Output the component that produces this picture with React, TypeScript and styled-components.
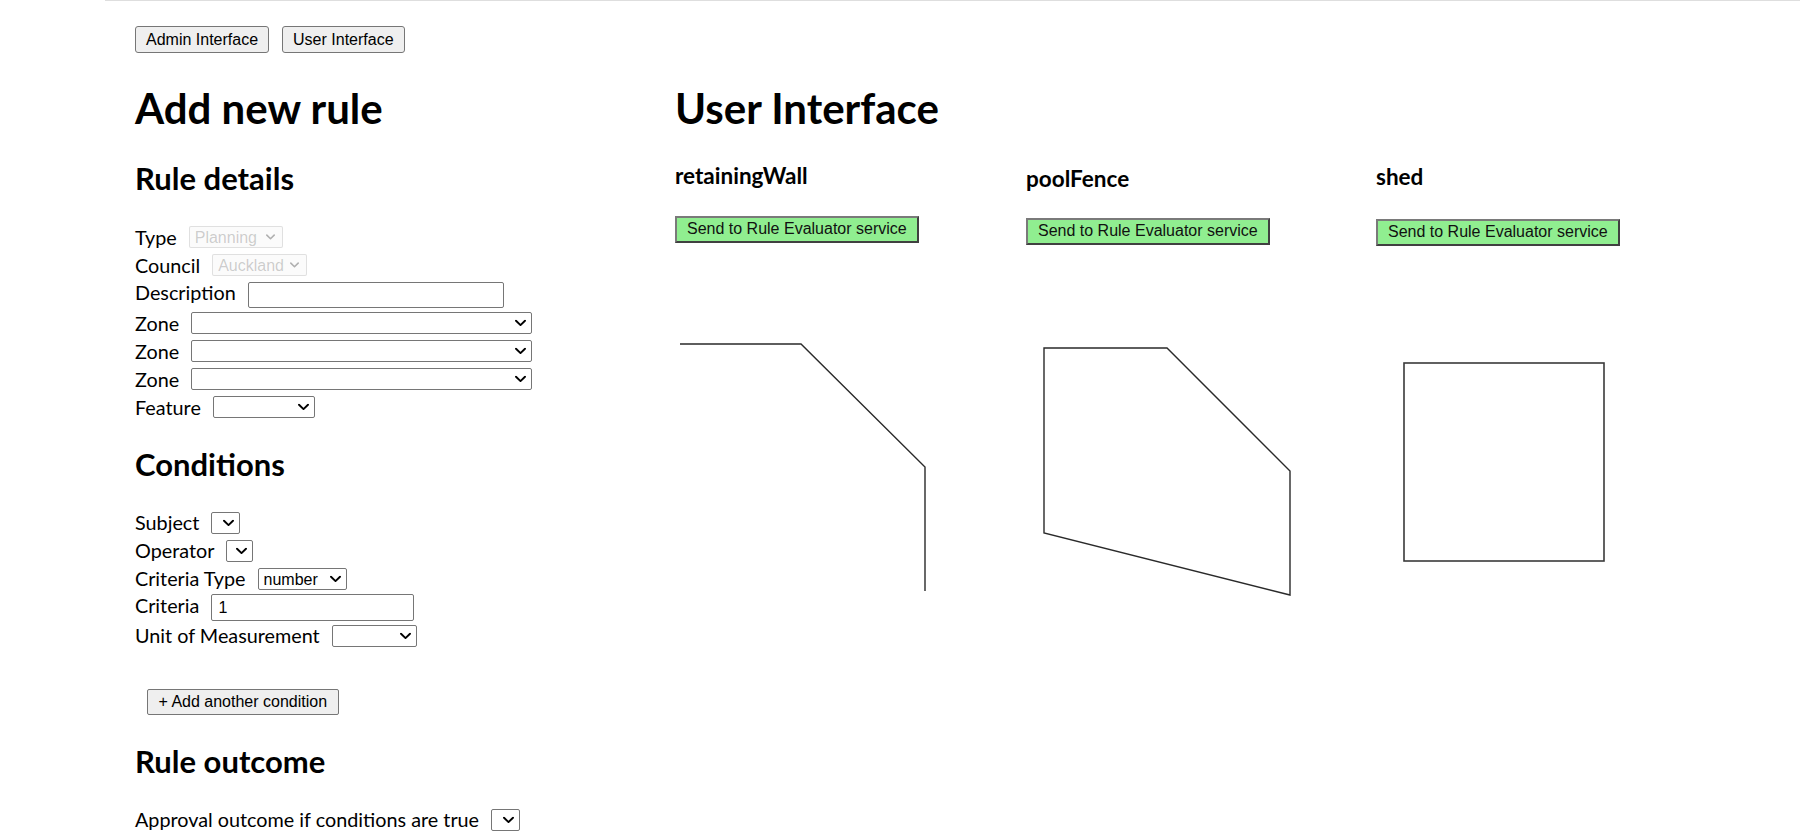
import React from "react";
import styled, { createGlobalStyle } from "styled-components";

const Global = createGlobalStyle`
  html, body { margin: 0; padding: 0; background: #fff; }
  body {
    font-family: Lato, "Segoe UI", "Noto Sans", sans-serif;
    font-size: 19.8px;
    line-height: 1.2;
    color: #000;
  }
`;

const Shell = styled.div`
  margin-left: 105px;
  border-top: 1px solid #dedede;
  padding: 25px 0 0 30px;
  height: 832px;
  box-sizing: border-box;
  overflow: hidden;
`;

const Nav = styled.div`
  display: flex;
  gap: 13px;
`;

const ctrlFont = `font-family: "Liberation Sans", Arial, sans-serif; font-size: 16px;`;

const NavButton = styled.button`
  ${ctrlFont}
  height: 27px;
  padding: 0 10px;
  border: 1px solid #767676;
  border-radius: 3px;
  background: #efefef;
  color: #000;
`;

const Columns = styled.div`
  display: grid;
  grid-template-columns: 540px 1fr;
`;

const Column = styled.div`
  display: flex;
  flex-direction: column;
  align-items: flex-start;
`;

const Title = styled.h1`
  margin: 29.5px 0 0;
  font-size: 42px;
  line-height: 1.2;
  font-weight: 700;
`;

const Section = styled.h2<{ $mt: number }>`
  margin: ${(p) => p.$mt}px 0 0;
  font-size: 31px;
  line-height: 1.2;
  font-weight: 700;
`;

const Rows = styled.div<{ $mt: number }>`
  margin-top: ${(p) => p.$mt}px;
  display: flex;
  flex-direction: column;
`;

const Row = styled.div<{ $h?: number; $field?: number }>`
  display: flex;
  align-items: ${(p) => (p.$field !== undefined ? "baseline" : "center")};
  gap: 12px;
  height: ${(p) => p.$h ?? 28}px;
  padding-top: ${(p) => p.$field ?? 0}px;
  box-sizing: border-box;
  white-space: nowrap;
`;

const Label = styled.span`
  font-size: 19.8px;
`;

const SelectBox = styled.span<{ $w: number }>`
  position: relative;
  display: inline-block;
  width: ${(p) => p.$w}px;
  height: 22px;
`;

const NativeSelect = styled.select`
  ${ctrlFont}
  appearance: none;
  -webkit-appearance: none;
  display: block;
  width: 100%;
  height: 100%;
  box-sizing: border-box;
  padding: 0 18px 0 5px;
  border: 1px solid #767676;
  border-radius: 2px;
  background: #fff;
  color: #000;
  &:disabled {
    color: rgba(16, 16, 16, 0.3);
    border-color: rgba(118, 118, 118, 0.3);
    background: rgba(239, 239, 239, 0.3);
  }
`;

const Chevron = styled.svg<{ $dim?: boolean }>`
  position: absolute;
  right: ${(p) => (p.$dim ? 8 : 6)}px;
  top: 50%;
  width: ${(p) => (p.$dim ? 9 : 11)}px;
  height: 7px;
  transform: translateY(-50%);
  pointer-events: none;
  stroke: ${(p) => (p.$dim ? "#b0b0b0" : "#000")};
`;

function Select({ w, disabled, value }: { w: number; disabled?: boolean; value?: string }) {
  return (
    <SelectBox $w={w}>
      <NativeSelect disabled={disabled} defaultValue={value ?? ""}>
        <option value={value ?? ""}>{value ?? ""}</option>
      </NativeSelect>
      <Chevron $dim={disabled} viewBox="0 0 11 7" fill="none">
        <path d="M1 1.2 L5.5 5.6 L10 1.2" strokeWidth="1.9" strokeLinecap="round" strokeLinejoin="round" />
      </Chevron>
    </SelectBox>
  );
}

const TextInput = styled.input<{ $w: number; $h: number }>`
  ${ctrlFont}
  width: ${(p) => p.$w}px;
  height: ${(p) => p.$h}px;
  box-sizing: border-box;
  padding: 1px 6px;
  border: 1px solid #767676;
  border-radius: 2px;
  color: #000;
`;

const AddButton = styled.button`
  ${ctrlFont}
  margin: 38.5px 0 0 12px;
  height: 26px;
  padding: 0 10.5px;
  border: 1px solid #767676;
  border-radius: 2px;
  background: #efefef;
  color: #000;
`;

const Cards = styled.div`
  display: grid;
  grid-template-columns: 351px 350px 1fr;
`;

const Card = styled.div<{ $pad: number }>`
  display: flex;
  flex-direction: column;
  align-items: flex-start;
  padding-top: ${(p) => p.$pad}px;
`;

const CardTitle = styled.h3`
  margin: 0;
  font-size: 22.5px;
  line-height: 1.2;
  font-weight: 700;
`;

const SendButton = styled.button<{ $mt: number }>`
  ${ctrlFont}
  margin-top: ${(p) => p.$mt}px;
  height: 27px;
  padding: 0 10px;
  border: 2px solid;
  border-color: #7a7a7a #404040 #404040 #7a7a7a;
  border-radius: 0;
  background: #90ee90;
  color: #111;
`;

const Drawing = styled.svg<{ $mt: number }>`
  display: block;
  margin-top: ${(p) => p.$mt}px;
  overflow: visible;
`;

type Shape = {
  name: string;
  pad: number;
  btn: number;
  svgTop: number;
  kind: "polyline" | "polygon" | "rect";
  points: string;
};

const shapes: Shape[] = [
  { name: "retainingWall", pad: 28.9, btn: 27.2, svgTop: 100, kind: "polyline", points: "5,1 126,1 250,124 250,248" },
  { name: "poolFence", pad: 31.9, btn: 26.2, svgTop: 102, kind: "polygon", points: "18,1 141,1 264,124 264,248 18,186" },
  { name: "shed", pad: 29.9, btn: 29.2, svgTop: 116, kind: "rect", points: "" },
];

function ShapeDrawing({ s }: { s: Shape }) {
  return (
    <Drawing $mt={s.svgTop} width="300" height="250" viewBox="0 0 300 250">
      {s.kind === "polyline" && <polyline points={s.points} fill="none" stroke="#2a2a2a" strokeWidth="1.4" />}
      {s.kind === "polygon" && <polygon points={s.points} fill="none" stroke="#2a2a2a" strokeWidth="1.4" />}
      {s.kind === "rect" && <rect x="28" y="1" width="200" height="198" fill="none" stroke="#3a3a3a" strokeWidth="1.6" />}
    </Drawing>
  );
}

export default function App() {
  return (
    <>
      <Global />
      <Shell>
        <Nav>
          <NavButton>Admin Interface</NavButton>
          <NavButton>User Interface</NavButton>
        </Nav>
        <Columns>
          <Column>
            <Title>Add new rule</Title>
            <Section $mt={27.5}>Rule details</Section>
            <Rows $mt={25.9}>
              <Row>
                <Label>Type</Label>
                <Select w={94} disabled value="Planning" />
              </Row>
              <Row>
                <Label>Council</Label>
                <Select w={95} disabled value="Auckland" />
              </Row>
              <Row $h={30} $field={1.5}>
                <Label>Description</Label>
                <TextInput $w={256} $h={26} type="text" defaultValue="" />
              </Row>
              <Row>
                <Label>Zone</Label>
                <Select w={341} />
              </Row>
              <Row>
                <Label>Zone</Label>
                <Select w={341} />
              </Row>
              <Row>
                <Label>Zone</Label>
                <Select w={341} />
              </Row>
              <Row>
                <Label>Feature</Label>
                <Select w={102} />
              </Row>
            </Rows>
            <Section $mt={24.9}>Conditions</Section>
            <Rows $mt={25.8}>
              <Row>
                <Label>Subject</Label>
                <Select w={29} />
              </Row>
              <Row>
                <Label>Operator</Label>
                <Select w={27} />
              </Row>
              <Row>
                <Label>Criteria Type</Label>
                <Select w={89} value="number" />
              </Row>
              <Row $h={29} $field={0.5}>
                <Label>Criteria</Label>
                <TextInput $w={203} $h={27} type="text" defaultValue="1" />
              </Row>
              <Row>
                <Label>Unit of Measurement</Label>
                <Select w={85} />
              </Row>
            </Rows>
            <AddButton>+ Add another condition</AddButton>
            <Section $mt={28.4}>Rule outcome</Section>
            <Rows $mt={25.3}>
              <Row>
                <Label>Approval outcome if conditions are true</Label>
                <Select w={29} />
              </Row>
            </Rows>
          </Column>
          <Column>
            <Title>User Interface</Title>
            <Cards>
              {shapes.map((s) => (
                <Card key={s.name} $pad={s.pad}>
                  <CardTitle>{s.name}</CardTitle>
                  <SendButton $mt={s.btn}>Send to Rule Evaluator service</SendButton>
                  <ShapeDrawing s={s} />
                </Card>
              ))}
            </Cards>
          </Column>
        </Columns>
      </Shell>
    </>
  );
}
